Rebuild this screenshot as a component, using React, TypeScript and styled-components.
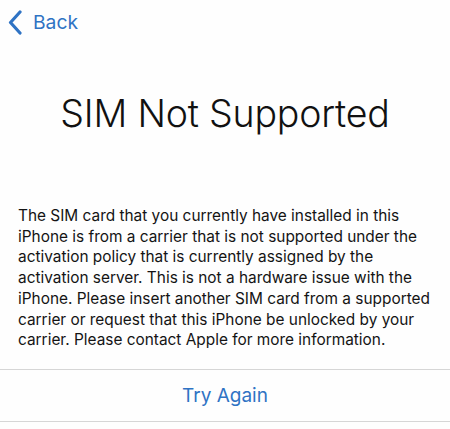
import React from 'react';
import styled, { createGlobalStyle } from 'styled-components';

const Global = createGlobalStyle`
  html, body {
    margin: 0;
    padding: 0;
    background: #ffffff;
  }
  body {
    font-family: Inter, "Liberation Sans", Arial, sans-serif;
    -webkit-font-smoothing: antialiased;
  }
`;

const Screen = styled.div`
  width: 450px;
  height: 429px;
  display: flex;
  flex-direction: column;
  background: #fefefe;
  overflow: hidden;
`;

const NavBar = styled.div`
  height: 44px;
  display: flex;
  align-items: center;
  padding-left: 8px;
`;

const BackButton = styled.button`
  display: flex;
  align-items: center;
  gap: 11px;
  border: none;
  background: none;
  padding: 0;
  color: #2f73c4;
  font-family: inherit;
  font-size: 19.3px;
  cursor: pointer;
`;

const Title = styled.h1`
  margin: 47px 0 0;
  text-align: center;
  font-weight: 300;
  font-size: 37.5px;
  line-height: 46px;
  letter-spacing: -0.2px;
  color: #111;
`;

const Body = styled.p`
  margin: 69px 0 0;
  padding: 0 4px 0 18px;
  font-size: 15.4px;
  line-height: 20.7px;
  color: #141414;
`;

const Footer = styled.div`
  margin-top: auto;
  margin-bottom: 7px;
  height: 51px;
  border-top: 1px solid #d6d6d6;
  border-bottom: 1px solid #d6d6d6;
  display: flex;
  align-items: center;
  justify-content: center;
`;

const ActionButton = styled.button`
  border: none;
  background: none;
  padding: 0;
  color: #2f73c4;
  font-family: inherit;
  font-size: 19px;
  cursor: pointer;
`;

function Chevron() {
  return (
    <svg width="14" height="25" viewBox="0 0 14 25">
      <path d="M12 2 L2.5 12.5 L12 23" fill="none" stroke="#2f73c4" strokeWidth="3.2" strokeLinecap="round" strokeLinejoin="round" />
    </svg>
  );
}

export default function App() {
  return (
    <Screen>
      <Global />
      <NavBar>
        <BackButton>
          <Chevron />
          Back
        </BackButton>
      </NavBar>
      <Title>SIM Not Supported</Title>
      <Body>
        The SIM card that you currently have installed in this iPhone is from a carrier that is not
        supported under the activation policy that is currently assigned by the activation server.
        This is not a hardware issue with the iPhone. Please insert another SIM card from a supported
        carrier or request that this iPhone be unlocked by your carrier. Please contact Apple for more
        information.
      </Body>
      <Footer>
        <ActionButton>Try Again</ActionButton>
      </Footer>
    </Screen>
  );
}
